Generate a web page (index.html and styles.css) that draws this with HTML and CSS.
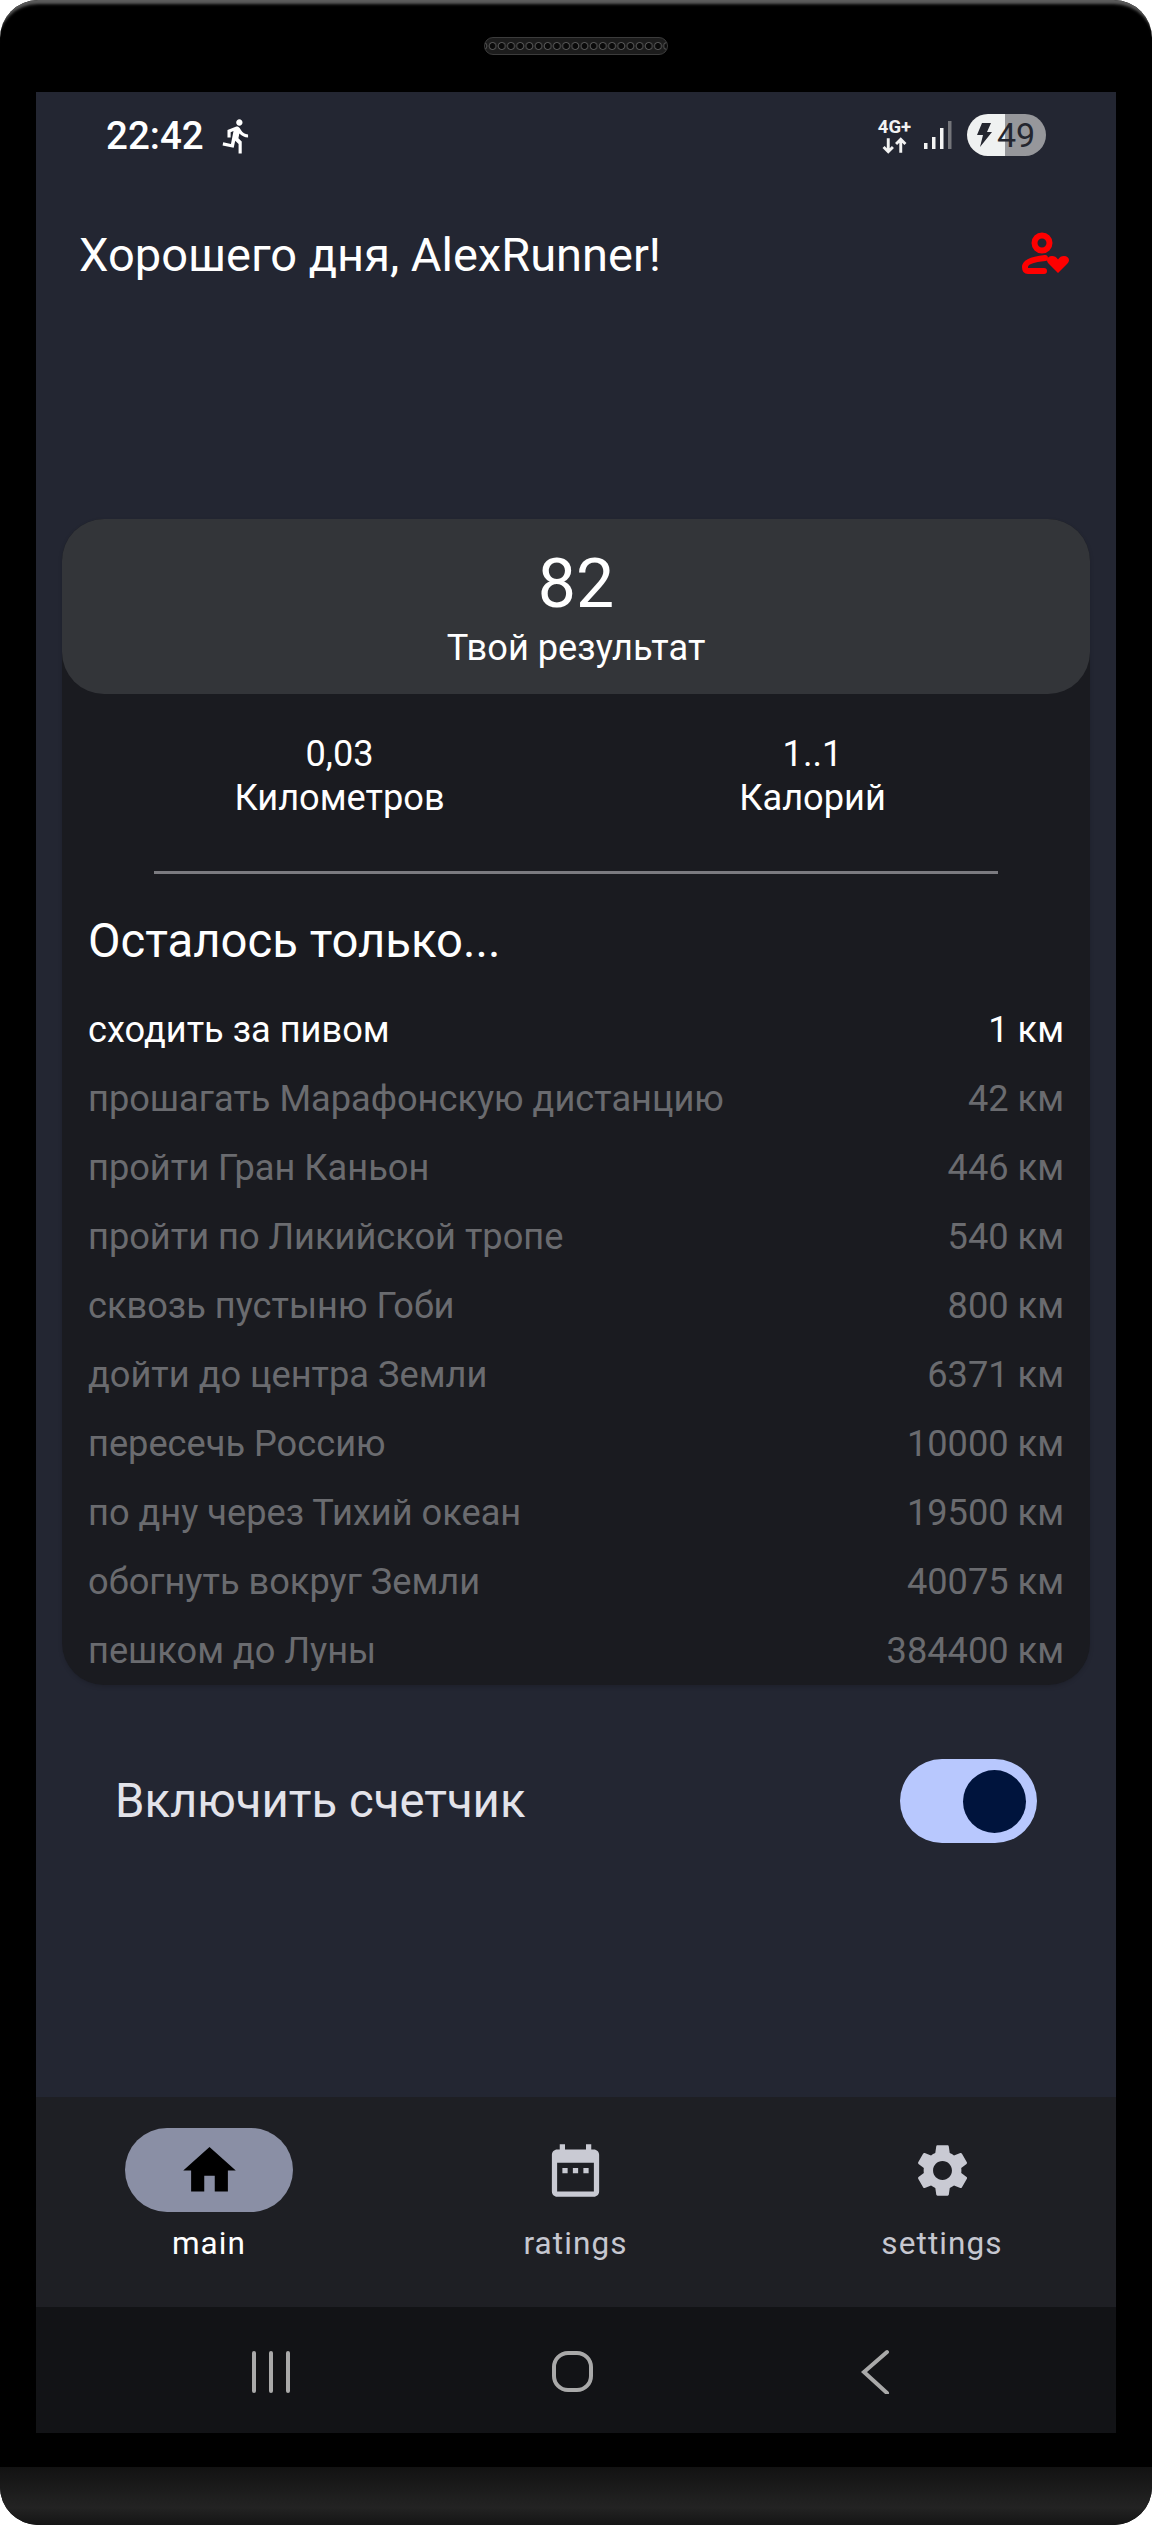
FILE: index.html
```html
<!DOCTYPE html>
<html>

<head>
<title>Счетчик</title>
<meta charset="utf-8" />
<link rel="stylesheet" href="styles.css">
</head>

<body>
<div class="phone">
	<div class="bezel"><div class="speaker"></div></div>
	<div class="screen">
		<div class="status">
			<div class="status-left">
				<span class="clock">22:42</span>
				<svg class="run-icon" viewBox="0 0 24 24"><path d="M13.49 5.48c1.1 0 2-.9 2-2s-.9-2-2-2-2 .9-2 2 .9 2 2 2zm-3.6 13.9l1-4.4 2.1 2v6h2v-7.5l-2.1-2 .6-3c1.3 1.5 3.3 2.5 5.5 2.5v-2c-1.9 0-3.5-1-4.3-2.4l-1-1.6c-.4-.6-1-1-1.7-1-.3 0-.5.1-.8.1l-5.2 2.2v4.7h2v-3.4l1.8-.7-1.6 8.1-4.9-1-.4 2 7 1.4z"/></svg>
			</div>
			<div class="status-right">
				<div class="net">
					<span class="net-label">4G+</span>
					<svg class="net-arrows" viewBox="0 0 24 16"><path d="M6 1v13M1.5 9.5L6 14l4.500-4.500M18 15V2M13.500 6.500L18 2l4.500 4.500"/></svg>
				</div>
				<svg class="signal" viewBox="0 0 28 28"><rect x="0" y="22" width="3.500" height="6"/><rect x="8" y="16" width="3.500" height="12"/><rect x="16" y="7" width="3.500" height="21"/><rect class="signal-off" x="24" y="0" width="3.500" height="28"/></svg>
				<div class="battery">
					<svg class="bolt" viewBox="0 0 16 24"><path d="M6 0h9l-4 9h5L4 24l3-12H1z"/></svg>
					<span class="battery-level">49</span>
				</div>
			</div>
		</div>

		<div class="topbar">
			<span class="greeting">Хорошего дня, AlexRunner!</span>
			<svg class="profile-icon" viewBox="0 0 50 44"><circle cx="22" cy="11" r="7.500"/><path d="M25 26C16 27 5 29 5 35c0 3 1 4 3 4h16"/><path class="heart" d="M38 41L29 32c-4-4-1.500-8 3-8 2.500 0 4.500 1 6 3.500 1.500-2.500 3.500-3.500 6-3.500 4.500 0 7 4 3 8z"/></svg>
		</div>

		<div class="card">
			<div class="result">
				<div class="result-value">82</div>
				<div class="result-label">Твой результат</div>
			</div>
			<div class="stats">
				<div class="stat"><div>0,03</div><div>Километров</div></div>
				<div class="stat"><div>1..1</div><div>Калорий</div></div>
			</div>
			<div class="divider"></div>
			<div class="left-title">Осталось только...</div>
			<div class="goal active"><span>сходить за пивом</span><span>1 км</span></div>
			<div class="goal"><span>прошагать Марафонскую дистанцию</span><span>42 км</span></div>
			<div class="goal"><span>пройти Гран Каньон</span><span>446 км</span></div>
			<div class="goal"><span>пройти по Ликийской тропе</span><span>540 км</span></div>
			<div class="goal"><span>сквозь пустыню Гоби</span><span>800 км</span></div>
			<div class="goal"><span>дойти до центра Земли</span><span>6371 км</span></div>
			<div class="goal"><span>пересечь Россию</span><span>10000 км</span></div>
			<div class="goal"><span>по дну через Тихий океан</span><span>19500 км</span></div>
			<div class="goal"><span>обогнуть вокруг Земли</span><span>40075 км</span></div>
			<div class="goal"><span>пешком до Луны</span><span>384400 км</span></div>
		</div>

		<div class="counter">
			<span class="counter-label">Включить счетчик</span>
			<div class="switch"><div class="switch-knob"></div></div>
		</div>

		<div class="spacer"></div>

		<div class="tabs">
			<div class="tab selected">
				<div class="tab-pill"><svg viewBox="0 0 24 24"><path d="M10 20v-6h4v6h5v-8h3L12 3 2 12h3v8z"/></svg></div>
				<span>main</span>
			</div>
			<div class="tab">
				<div class="tab-pill"><svg viewBox="0 0 24 24"><path d="M9 11H7v2h2v-2zm4 0h-2v2h2v-2zm4 0h-2v2h2v-2zm2-7h-1V2h-2v2H8V2H6v2H5c-1.110 0-1.990.9-1.990 2L3 20c0 1.100.89 2 2 2h14c1.100 0 2-.9 2-2V6c0-1.100-.9-2-2-2zm0 16H5V9h14v11z"/></svg></div>
				<span>ratings</span>
			</div>
			<div class="tab">
				<div class="tab-pill"><svg viewBox="0 0 24 24"><path d="M19.140 12.940c.04-.3.06-.61.06-.94 0-.32-.02-.64-.07-.94l2.030-1.580c.18-.14.23-.41.12-.61l-1.920-3.320c-.12-.22-.37-.29-.59-.22l-2.390.96c-.5-.38-1.030-.7-1.620-.94l-.36-2.540c-.04-.24-.24-.41-.48-.41h-3.840c-.24 0-.43.17-.47.41l-.36 2.540c-.59.24-1.130.57-1.620.94l-2.390-.96c-.22-.08-.47 0-.59.22L2.740 8.870c-.12.21-.08.47.12.61l2.030 1.580c-.05.3-.07.62-.07.94s.02.64.07.94l-2.030 1.580c-.18.14-.23.41-.12.61l1.920 3.320c.12.22.37.29.59.22l2.390-.96c.5.38 1.030.7 1.620.94l.36 2.540c.05.24.24.41.48.41h3.840c.24 0 .44-.17.47-.41l.36-2.540c.59-.24 1.130-.56 1.620-.94l2.390.96c.22.08.47 0 .59-.22l1.920-3.320c.12-.22.07-.47-.12-.61l-2.010-1.580zM12 15.600c-1.980 0-3.600-1.620-3.600-3.600s1.620-3.600 3.600-3.600 3.600 1.620 3.600 3.600-1.620 3.600-3.600 3.600z"/></svg></div>
				<span>settings</span>
			</div>
		</div>

		<div class="sysnav">
			<svg viewBox="0 0 44 48"><path d="M6 7v38M23 7v38M40 7v38"/></svg>
			<svg viewBox="0 0 44 48"><rect x="3" y="7" width="37" height="37" rx="14"/></svg>
			<svg viewBox="0 0 44 48"><path d="M33 6L10 26l23 21"/></svg>
		</div>
	</div>
	<div class="chin-gap"></div>
	<div class="chin"></div>
</div>
</body>

</html>
```

FILE: styles.css
```css
body { margin: 0; background: #fff; font-family: Roboto, "Noto Sans", sans-serif; }
svg { display: block; }

.phone { width: 1152px; height: 2525px; background: #000; border-radius: 38px; overflow: hidden; display: flex; flex-direction: column; box-shadow: inset 0 7px 3px -3px #5c5c5c; }
.bezel { height: 92px; display: flex; justify-content: center; padding-top: 37px; box-sizing: border-box; }
.speaker { width: 184px; height: 18px; box-sizing: border-box; border: 1px solid #3c3c3c; border-radius: 9px; background: radial-gradient(circle, #0a0a0a 2.600px, #5a5a5a 3.400px, #1c1c1c 4.400px) 3px 0 / 9.200px 100% repeat-x; }
.screen { width: 1080px; height: 2341px; margin: 0 36px; background: #232632; display: flex; flex-direction: column; }
.chin-gap { height: 34px; }
.chin { flex: 1; background: linear-gradient(#121212, #232323 70%, #141414); }

.status { height: 84px; padding: 2px 70px 0; box-sizing: border-box; display: flex; justify-content: space-between; align-items: center; }
.status-left { display: flex; align-items: center; gap: 14px; }
.clock { color: #fff; font-size: 38.500px; font-weight: 500; }
.run-icon { width: 38px; height: 38px; fill: #fff; margin-top: 2px; }
.status-right { display: flex; align-items: center; }
.net { width: 33px; padding-top: 4px; display: flex; flex-direction: column; align-items: center; color: #f2f2f2; }
.net-label { font-size: 18.500px; font-weight: 700; line-height: 15px; }
.net-arrows { width: 25px; height: 17px; margin-top: 2px; fill: none; stroke: #f2f2f2; stroke-width: 2.800; }
.signal { width: 28px; height: 28px; margin: 0 15px 0 13px; fill: #f4f4f4; }
.signal-off { fill: #74757a; }
.battery { width: 79px; height: 42px; border-radius: 21px; background: linear-gradient(90deg, #eff1f1 48%, #96979b 48%); display: flex; align-items: center; box-sizing: border-box; padding-left: 9px; color: #24262f; }
.bolt { width: 16px; height: 24px; fill: #24262f; }
.battery-level { font-size: 34px; margin-left: 5px; line-height: 42px; }

.topbar { height: 156px; padding: 0 46px 0 43px; display: flex; justify-content: space-between; align-items: center; }
.greeting { color: #fff; font-size: 47px; }
.profile-icon { width: 50px; height: 44px; fill: none; stroke: #f00; stroke-width: 6; stroke-linecap: round; }
.heart { fill: #f00; stroke: none; }

.card { margin: 187px 26px 0 26px; background: #1a1b20; border-radius: 42px; box-shadow: 0 2px 4px rgba(0, 0, 0, .15); }
.result { height: 175px; box-sizing: border-box; padding-top: 26px; background: #333539; border-radius: 42px; color: #fff; text-align: center; }
.result-value { font-size: 68px; line-height: 79px; }
.result-label { font-size: 36.200px; line-height: 48px; }
.stats { display: flex; padding: 38px 0 0 0; color: #fff; font-size: 36.200px; line-height: 44px; text-align: center; }
.stat { width: 473px; }
.stat:first-child { margin-left: 41px; }
.divider { height: 3px; margin: 51px 92px 0 92px; background: #7b7b80; }
.left-title { margin: 36px 26px 23px; color: #fff; font-size: 47.250px; line-height: 62px; }
.goal { height: 69px; padding: 0 26px; display: flex; justify-content: space-between; align-items: center; color: #6a6b6f; font-size: 36.200px; }
.goal.active { color: #fff; }

.counter { margin-top: 74px; padding: 0 79px; display: flex; justify-content: space-between; align-items: center; }
.counter-label { color: #e3e3ea; font-size: 47.250px; }
.switch { width: 137px; height: 84px; border-radius: 42px; background: #b8c8fe; display: flex; justify-content: flex-end; align-items: center; padding-right: 11px; box-sizing: border-box; }
.switch-knob { width: 63px; height: 63px; border-radius: 50%; background: #00143d; }

.spacer { flex: 1; }

.tabs { height: 210px; padding: 31px 90px 0 89px; box-sizing: border-box; background: #1e1f24; display: flex; justify-content: space-between; }
.tab { width: 168px; display: flex; flex-direction: column; align-items: center; color: #c6c7d0; font-size: 31.500px; letter-spacing: 1.100px; }
.tab-pill { width: 168px; height: 84px; border-radius: 42px; display: flex; justify-content: center; align-items: center; }
.tab-pill svg { width: 63px; height: 63px; fill: #c9cad3; }
.tab span { margin-top: 11px; line-height: 42px; white-space: nowrap; }
.tab.selected { color: #fff; }
.tab.selected .tab-pill { background: #8a8fa5; }
.tab.selected svg { fill: #000; }

.sysnav { height: 126px; padding: 0 218px 0 212px; box-sizing: border-box; background: #121316; display: flex; justify-content: space-between; align-items: center; }
.sysnav svg { width: 44px; height: 48px; fill: none; stroke: #a9a9a9; stroke-width: 4; stroke-linecap: round; }
```
